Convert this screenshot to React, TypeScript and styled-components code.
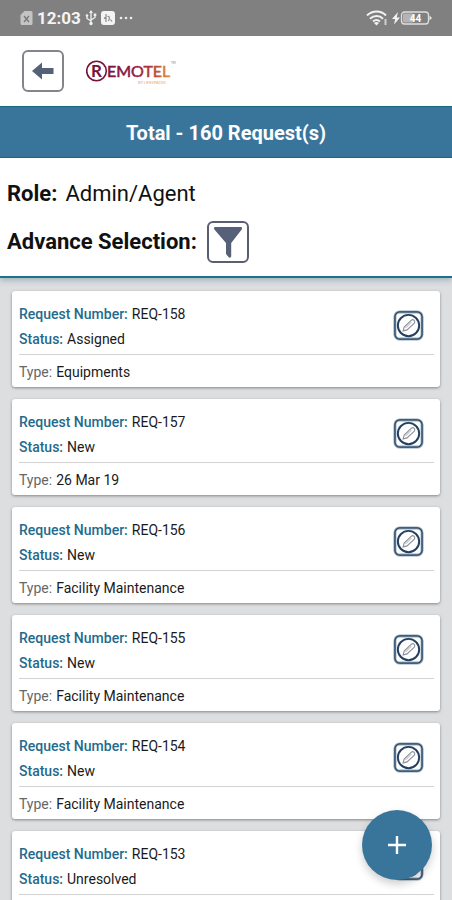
import React from "react";
import styled, { createGlobalStyle } from "styled-components";

const GlobalStyle = createGlobalStyle`
  *, *::before, *::after { box-sizing: border-box; }
  body { margin: 0; font-family: Roboto, "Liberation Sans", sans-serif; color: #1a1a1a; }
  button { font: inherit; padding: 0; cursor: pointer; }
`;

const Screen = styled.div`
  display: flex;
  flex-direction: column;
  height: 100vh;
  background: #dcdee0;
`;

const StatusBar = styled.div`
  display: flex;
  flex: none;
  align-items: center;
  justify-content: space-between;
  height: 36px;
  padding: 0 20px;
  background: #808080;
  color: #f4f4f4;
`;

const StatusGroup = styled.div`
  display: flex;
  align-items: center;
  gap: 4px;
`;

const Clock = styled.span`
  font-size: 17px;
  line-height: 20px;
  font-weight: 700;
`;

const Header = styled.header`
  display: flex;
  flex: none;
  align-items: center;
  gap: 22px;
  height: 70px;
  padding: 0 22px;
  background: #fff;
`;

const IconButton = styled.button`
  display: flex;
  align-items: center;
  justify-content: center;
  width: 42px;
  height: 42px;
  border: 2px solid ${(p) => p.color};
  border-radius: 6px;
  background: #fff;
`;

const Banner = styled.h1`
  flex: none;
  margin: 0;
  padding: 13px 12px 11px;
  border: solid #1c6683;
  border-width: 1px 0;
  background: #39759b;
  color: #fff;
  font-size: 20px;
  line-height: 26px;
  font-weight: 700;
  text-align: center;
`;

const Filters = styled.section`
  flex: none;
  padding: 19px 7px 13px;
  border-bottom: 2px solid #1f7090;
  background: #fff;
  box-shadow: 0 2px 6px rgba(40, 90, 110, 0.35);
  color: #111;
  font-size: 22px;
  line-height: 34px;
  z-index: 1;
`;

const FilterRow = styled.div<{ $gap: number }>`
  display: flex;
  align-items: center;
  gap: ${(p) => p.$gap}px;
  & + & { margin-top: 10px; }
`;

const FilterLabel = styled.span`
  font-weight: 700;
`;

const List = styled.ul`
  display: flex;
  flex: 1;
  flex-direction: column;
  gap: 12px;
  min-height: 0;
  margin: 0;
  padding: 13px 12px;
  overflow-y: auto;
  scrollbar-width: none;
  list-style: none;
`;

const Card = styled.li`
  flex: none;
  padding: 11px 6px 2px 7px;
  border-radius: 3px;
  background: #fff;
  box-shadow: 0 1px 3px rgba(0, 0, 0, 0.4);
  font-size: 14px;
  line-height: 25px;
`;

const CardTop = styled.div`
  display: flex;
  align-items: flex-start;
  justify-content: space-between;
  padding: 0 10px 2px 0;
  border-bottom: 1px solid #d3d3d3;
`;

const CardBottom = styled.div`
  padding-top: 5px;
`;

const Field = styled.div`
  display: flex;
  gap: 4px;
`;

const Label = styled.span<{ $muted?: boolean }>`
  color: ${(p) => (p.$muted ? "#666" : "#246a8c")};
  font-weight: ${(p) => (p.$muted ? 400 : 500)};
`;

const EditButton = styled.button`
  display: block;
  width: 31px;
  height: 31px;
  margin-top: 8px;
  border: 0;
  background: none;
`;

const AddButton = styled.button`
  position: fixed;
  right: 20px;
  bottom: 20px;
  z-index: 2;
  display: flex;
  align-items: center;
  justify-content: center;
  width: 70px;
  height: 70px;
  border: 0;
  border-radius: 50%;
  background: #39759b;
  box-shadow: 0 4px 8px rgba(0, 0, 0, 0.2);
`;

const requests = [
  { id: "REQ-158", status: "Assigned", type: "Equipments" },
  { id: "REQ-157", status: "New", type: "26 Mar 19" },
  { id: "REQ-156", status: "New", type: "Facility Maintenance" },
  { id: "REQ-155", status: "New", type: "Facility Maintenance" },
  { id: "REQ-154", status: "New", type: "Facility Maintenance" },
  { id: "REQ-153", status: "Unresolved", type: "Facility Maintenance" },
];

const SimIcon = () => (
  <svg width="13" height="16" viewBox="0 0 13 16" aria-hidden="true">
    <path d="M4.500 1H11a1.500 1.500 0 0 1 1.500 1.500v11A1.500 1.500 0 0 1 11 15H2A1.500 1.500 0 0 1 .5 13.500V5z" fill="#c4c4c4" />
    <path d="M4 6l5 6M9 6l-5 6" stroke="#777" strokeWidth="1.300" />
  </svg>
);

const UsbIcon = () => (
  <svg width="12" height="16" viewBox="0 0 12 16" fill="none" stroke="#f0f0f0" strokeWidth="1.300" aria-hidden="true">
    <path d="M6 2v11M6 11 2 8.500V6M6 10l4-2.500V5" />
    <path d="M6 0l2 3H4z" fill="#f0f0f0" stroke="none" />
    <circle cx="6" cy="13.500" r="1.700" fill="#f0f0f0" stroke="none" />
    <circle cx="2" cy="5.500" r="1.300" fill="#f0f0f0" stroke="none" />
    <path d="M8.700 3.500h2.600v2.600H8.700z" fill="#f0f0f0" stroke="none" />
  </svg>
);

const AppBadgeIcon = () => (
  <svg width="14" height="14" viewBox="0 0 14 14" aria-hidden="true">
    <rect width="14" height="14" rx="3" fill="#f4f4f4" />
    <path d="M3 7.500 5 6v5M5 3v3M6.500 5.500c2-1 2.500 2 1 4.500M9.500 8.500l1.500 2" fill="none" stroke="#8c8c8c" strokeWidth="1.200" />
  </svg>
);

const DotsIcon = () => (
  <svg width="14" height="4" viewBox="0 0 14 4" fill="#ededed" aria-hidden="true">
    <circle cx="2" cy="2" r="1.300" />
    <circle cx="7" cy="2" r="1.300" />
    <circle cx="12" cy="2" r="1.300" />
  </svg>
);

const WifiIcon = () => (
  <svg width="22" height="16" viewBox="0 0 22 16" fill="none" stroke="#f2f2f2" strokeWidth="2" aria-hidden="true">
    <path d="M1 5.500c5.500-5.300 14-5.300 19 0M4 8.700c4-3.600 9.500-3.600 13 0M7 11.500c2.300-2 4.700-2 7 0" />
    <path d="M10.500 15.500 8 13c1.500-1.200 3.500-1.200 5 0z" fill="#f2f2f2" stroke="none" />
    <path d="M19.500 9v6" stroke="#cfcfcf" />
  </svg>
);

const BatteryIcon = () => (
  <svg width="40" height="16" viewBox="0 0 40 16" role="img" aria-label="Battery 44 percent, charging">
    <path d="M6 2 0 9h3.200L2 14.500 8 7.500H4.700z" fill="#f4f4f4" />
    <rect x="9.500" y="2" width="27" height="12" rx="3" fill="none" stroke="#dedede" strokeWidth="1.300" />
    <rect x="11" y="3.500" width="10" height="9" rx="1" fill="#b4b4b4" />
    <path d="M37.500 5.500 40 8l-2.500 2.500z" fill="#e6e6e6" />
    <text x="23.500" y="11.500" textAnchor="middle" fontFamily="Roboto, sans-serif" fontWeight="700" fontSize="10" fill="#fff">44</text>
  </svg>
);

const BackIcon = () => (
  <svg width="24" height="20" viewBox="0 0 24 20" aria-hidden="true">
    <path d="M1 10 11 1.500V7h11.500v6H11v5.500z" fill="#536279" />
  </svg>
);

const FunnelIcon = () => (
  <svg width="30" height="32" viewBox="0 0 30 32" aria-hidden="true">
    <path d="M2.500 1h25c1.500 0 2 1.200 1.200 2.400L18.200 17v13c0 1.800-1.300 2-2.500 1.200L13.800 29c-.6-.5-.8-.9-.8-1.700V17L1.400 3.400C.5 2.200 1 1 2.500 1z" fill="#566078" />
  </svg>
);

const Logo = () => (
  <svg width="90" height="28" viewBox="0 0 90 28" role="img" aria-label="Remotel">
    <defs>
      <linearGradient id="brand" gradientUnits="userSpaceOnUse" x1="0" y1="0" x2="88" y2="0">
        <stop offset="0" stopColor="#6d1238" />
        <stop offset="0.500" stopColor="#8b1740" />
        <stop offset="0.750" stopColor="#b63a35" />
        <stop offset="1" stopColor="#eda540" />
      </linearGradient>
    </defs>
    <circle cx="10.500" cy="14" r="9.800" fill="none" stroke="url(#brand)" strokeWidth="1.600" />
    <g fill="url(#brand)" fontFamily="Lato, sans-serif">
      <text x="5" y="20" fontSize="17" fontWeight="700">R</text>
      <text x="21" y="20" fontSize="16" stroke="url(#brand)" strokeWidth="0.500">EMOTEL</text>
    </g>
    <text x="52" y="27" fontFamily="Lato, sans-serif" fontSize="4" fill="#e8a765">BY LIFESPACES</text>
    <text x="85" y="7" fontFamily="Lato, sans-serif" fontSize="3" fill="#777">TM</text>
  </svg>
);

const EditIcon = () => (
  <svg width="31" height="31" viewBox="0 0 32 32" fill="none" aria-hidden="true">
    <rect x="2" y="2" width="28" height="28" rx="5" stroke="#8ea6ba" strokeWidth="3" />
    <rect x="2" y="2" width="28" height="28" rx="5" stroke="#2c4765" strokeWidth="1.300" />
    <circle cx="16" cy="16" r="11" stroke="#263f5e" strokeWidth="2" />
    <path d="m10.500 21.500 1-4 7.500-7c2-1.500 4.500 1 3 3l-7.500 7z" stroke="#8d939b" strokeWidth="1.200" />
    <path d="m13 18.500 6-6" stroke="#a6abb2" />
  </svg>
);

const PlusIcon = () => (
  <svg width="20" height="20" viewBox="0 0 20 20" aria-hidden="true">
    <path d="M10 1v18M1 10h18" stroke="#fff" strokeWidth="2.400" />
  </svg>
);

export default function App() {
  return (
    <Screen>
      <GlobalStyle />
      <StatusBar>
        <StatusGroup>
          <SimIcon />
          <Clock>12:03</Clock>
          <UsbIcon />
          <AppBadgeIcon />
          <DotsIcon />
        </StatusGroup>
        <StatusGroup>
          <WifiIcon />
          <BatteryIcon />
        </StatusGroup>
      </StatusBar>
      <Header>
        <IconButton color="#83858a" aria-label="Back">
          <BackIcon />
        </IconButton>
        <Logo />
      </Header>
      <Banner>Total - 160 Request(s)</Banner>
      <Filters>
        <FilterRow $gap={8}>
          <FilterLabel>Role:</FilterLabel>
          <span>Admin/Agent</span>
        </FilterRow>
        <FilterRow $gap={10}>
          <FilterLabel id="selection-label">Advance Selection:</FilterLabel>
          <IconButton color="#5b5d70" aria-labelledby="selection-label">
            <FunnelIcon />
          </IconButton>
        </FilterRow>
      </Filters>
      <List>
        {requests.map((request) => (
          <Card key={request.id}>
            <CardTop>
              <div>
                <Field>
                  <Label>Request Number:</Label>
                  <span>{request.id}</span>
                </Field>
                <Field>
                  <Label>Status:</Label>
                  <span>{request.status}</span>
                </Field>
              </div>
              <EditButton aria-label={`Edit ${request.id}`}>
                <EditIcon />
              </EditButton>
            </CardTop>
            <CardBottom>
              <Field>
                <Label $muted>Type:</Label>
                <span>{request.type}</span>
              </Field>
            </CardBottom>
          </Card>
        ))}
      </List>
      <AddButton aria-label="Add request">
        <PlusIcon />
      </AddButton>
    </Screen>
  );
}
